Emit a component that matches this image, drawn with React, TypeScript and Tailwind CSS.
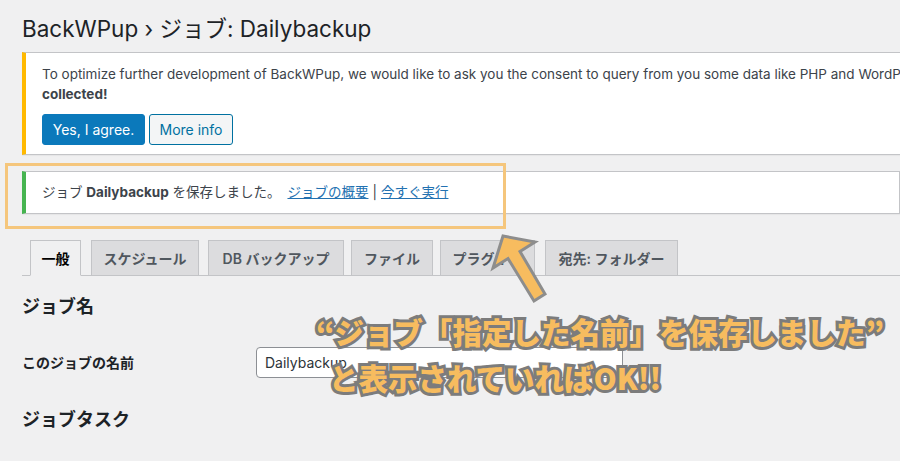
import React from 'react';

const tabs = [
  { label: '一般', w: 'w-[51px]', ml: 'ml-[8px]', active: true },
  { label: 'スケジュール', w: 'w-[108px]', ml: 'ml-[10px]', active: false },
  { label: 'DB バックアップ', w: 'w-[136px]', ml: 'ml-[9px]', active: false },
  { label: 'ファイル', w: 'w-[82px]', ml: 'ml-[7px]', active: false },
  { label: 'プラグイン', w: 'w-[95px]', ml: 'ml-[7px]', active: false },
  { label: '宛先: フォルダー', w: 'w-[133px]', ml: 'ml-[10px]', active: false },
];

function Arrow() {
  return (
    <svg
      className="absolute left-[480px] top-[225px]"
      width="80"
      height="85"
      viewBox="0 0 80 85"
    >
      <polygon
        points="23,11 55,17 40,26.5 65,69 54,76 28,33.5 13,43"
        fill="#f7bc5f"
        stroke="#8d8d8d"
        strokeWidth="3"
        strokeLinejoin="miter"
      />
    </svg>
  );
}

export default function App() {
  return (
    <div className="relative w-[900px] h-[461px] overflow-hidden bg-[#f0f0f1] text-[#3c434a] font-['Inter','Noto_Sans_CJK_JP',sans-serif]">
      <div className="pl-[22px]">
        {/* Page title */}
        <h1 className="pt-[14px] text-[22.5px] leading-[29px] font-normal text-[#1d2327]">
          BackWPup › ジョブ: Dailybackup
        </h1>

        {/* Consent notice */}
        <div className="mt-[9px] w-[1100px] bg-white border border-[#c3c4c7] border-l-4 border-l-[#ffb900] pl-4 pt-[11px] pb-[9px] text-[13.5px] leading-[20px] shadow-[0_1px_1px_rgba(0,0,0,0.04)]">
          <p className="whitespace-nowrap">
            To optimize further development of BackWPup, we would like to ask you the consent to query from you some data like PHP and WordPress version. No personal data will be
          </p>
          <p className="font-bold">collected!</p>
          <div className="mt-[10px] flex gap-[4px]">
            <button className="h-[31px] w-[103px] rounded-[3px] bg-[#0b79bb] text-white text-[14px] border border-[#0b79bb]">
              Yes, I agree.
            </button>
            <button className="h-[31px] w-[84px] rounded-[3px] bg-[#f3f5f6] text-[#0071a1] text-[14px] border border-[#0071a1]">
              More info
            </button>
          </div>
        </div>

        {/* Saved notice */}
        <div className="mt-[16px] h-[43px] flex items-center bg-white border border-[#c3c4c7] border-l-4 border-l-[#46b450] pl-4 text-[13.5px] shadow-[0_1px_1px_rgba(0,0,0,0.04)]">
          <span>
            ジョブ <strong className="font-bold">Dailybackup</strong> を保存しました。
          </span>
          <a className="ml-[7px] text-[#2271b1] underline">ジョブの概要</a>
          <span className="mx-[4px] text-[#3c434a]">|</span>
          <a className="text-[#2271b1] underline">今すぐ実行</a>
        </div>

        {/* Tabs */}
        <div className="mt-[26px] flex items-end border-b border-[#c3c4c7]">
          {tabs.map((t) => (
            <div
              key={t.label}
              className={`${t.w} ${t.ml} h-[36px] -mb-px flex items-center justify-center border border-[#c3c4c7] text-[14px] font-semibold whitespace-nowrap ${
                t.active
                  ? 'bg-[#f0f0f1] border-b-[#f0f0f1] text-[#000]'
                  : 'bg-[#dcdcde] text-[#50575e]'
              }`}
            >
              {t.label}
            </div>
          ))}
        </div>

        {/* Form */}
        <h3 className="mt-[19px] text-[18px] leading-[24px] font-bold text-[#1d2327]">ジョブ名</h3>
        <div className="mt-[28px] flex items-center">
          <label className="w-[234px] text-[14px] font-bold text-[#1d2327]">このジョブの名前</label>
          <div className="w-[367px] h-[31px] flex items-center rounded-[4px] border border-[#8c8f94] bg-white px-[8px] text-[14px] text-[#2c3338]">
            Dailybackup
          </div>
        </div>
        <h3 className="mt-[30px] text-[18px] leading-[24px] font-bold text-[#1d2327]">ジョブタスク</h3>
      </div>

      {/* Annotation overlays */}
      <div className="absolute left-[5px] top-[163px] w-[501px] h-[66px] border-[3px] border-[#f5c67c]" />
      <Arrow />
      <div className="absolute left-[316px] top-[308px] font-['Noto_Sans_CJK_JP',sans-serif] font-black text-[29.5px] leading-[46px] text-[#f7bc5f] [-webkit-text-stroke:6px_#7c7c7c] [paint-order:stroke_fill] whitespace-nowrap">
        <div>“ジョブ「指定した名前」を保存しました”</div>
        <div className="pl-[13px]">と表示されていればOK!!</div>
      </div>
    </div>
  );
}
